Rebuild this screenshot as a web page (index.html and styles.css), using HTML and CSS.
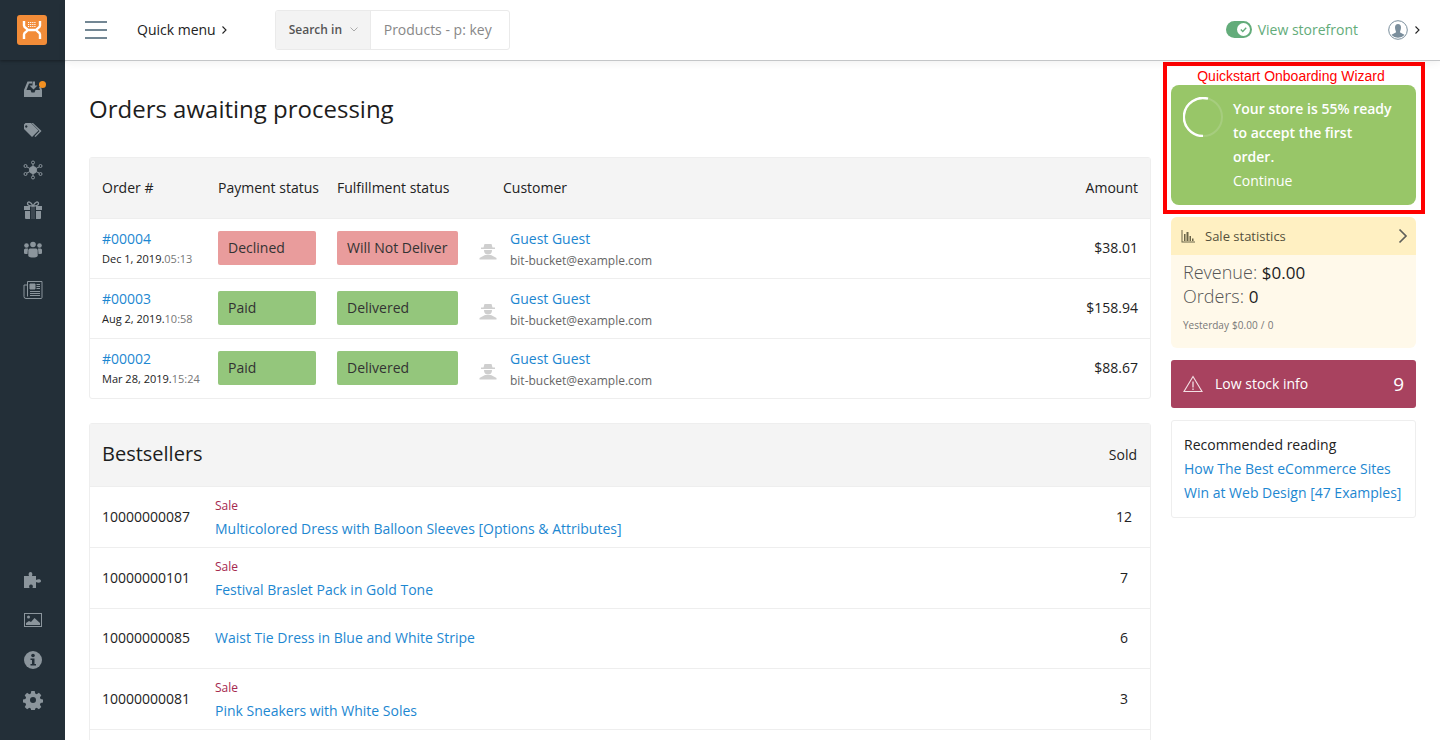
FILE: index.html
```html
<!DOCTYPE html>
<html lang="en">
<head>
<meta charset="utf-8">
<title>Orders awaiting processing</title>
<link rel="stylesheet" href="styles.css">
</head>
<body>
<div class="app">
  <nav class="sidebar">
    <div class="brand">
      <svg class="logo" width="30" height="30" viewBox="0 0 30 30"><rect width="30" height="30" rx="3" fill="#f28c38"/><path d="M7 6v4.500c0 2.500 3.500 3 3.500 4.500S7 17 7 19.500V24M23 6v4.500c0 2.500-3.500 3-3.500 4.500S23 17 23 19.500V24M10 15h10" fill="none" stroke="#fff" stroke-width="2.400"/><path d="M11 7.500h8M11 9.500h8M11 11.500h8" stroke="#fff" stroke-width="1.100" stroke-dasharray="1.200 .9"/></svg>
    </div>
    <div class="nav-top">
      <a class="nav-item"><svg width="20" height="20" viewBox="0 0 20 20" fill="#8b959c"><path d="M4.500 1.500H9v2H6L3.500 10h4l1 2.500h3l1-2.500H17l-1-3h2l1 3v7H1v-7z"/><path d="M9.500 1.500h2.500v4h2.500L10.500 9.500l-4-4h3z"/></svg><i class="dot"></i></a>
      <a class="nav-item"><svg width="20" height="20" viewBox="0 0 20 20" fill="#8b959c"><path d="M1 4.500V9l8 8 6.500-6.500L8 3H2.500zM4.500 6.500a1.200 1.200 0 1 1 0-.1z" fill-rule="evenodd"/><path d="M10 3l8.500 8-6 6-1-.8 5-5.200L8.500 3z"/></svg></a>
      <a class="nav-item"><svg width="20" height="20" viewBox="0 0 20 20" fill="#8b959c" stroke="#8b959c"><circle cx="10" cy="10" r="3.500"/><g fill="none" stroke-width="1"><circle cx="10" cy="2.500" r="1.500"/><circle cx="10" cy="17.500" r="1.500"/><circle cx="2.500" cy="6" r="1.500"/><circle cx="17.500" cy="6" r="1.500"/><circle cx="2.500" cy="14" r="1.500"/><circle cx="17.500" cy="14" r="1.500"/><path d="M10 4v3M10 13v3M4 7l3 1.500M16 7l-3 1.500M4 13l3-1.500M16 13l-3-1.500"/></g></svg></a>
      <a class="nav-item"><svg width="20" height="20" viewBox="0 0 20 20" fill="#8b959c"><path d="M1 6h6v4H1zM13 6h6v4h-6zM2 11h5v8H3a1 1 0 0 1-1-1zM13 11h5v7a1 1 0 0 1-1 1h-4z"/><path d="M8 6h4v13H8z" opacity=".25"/><path d="M10 6C8 1.500 4.500 1 4.500 3.500 4.500 5.500 7 6 10 6c3 0 5.500-.5 5.500-2.500C15.500 1 12 1.500 10 6z" fill="none" stroke="#8b959c" stroke-width="1.300"/></svg></a>
      <a class="nav-item"><svg width="20" height="20" viewBox="0 0 20 20" fill="#8b959c"><circle cx="3.500" cy="5.500" r="2.300"/><circle cx="10" cy="4.500" r="2.800"/><circle cx="16.500" cy="5.500" r="2.300"/><path d="M1 13.500V10c0-1 1-1.500 2-1.500h2L4.500 14H2.500zM19 13.500V10c0-1-1-1.500-2-1.500h-2l.5 5.500h2z"/><path d="M7 8.500h6c1 0 1.700 1 1.700 2V16c-1.500 2-8 2-9.400 0v-5.500c0-1 .7-2 1.700-2z"/></svg></a>
      <a class="nav-item"><svg width="20" height="20" viewBox="0 0 20 20" fill="none" stroke="#8b959c"><path d="M4.500 1.500h14.500v16a1 1 0 0 1-1 1H3A2 2 0 0 1 1 16.500V5h3.500zM4.500 5v11.500"/><path d="M7 4h5v5H7z" fill="#8b959c"/><path d="M13.500 4.500h3.500M13.500 6.500h3.500M13.500 8.500h3.500M7 11.500h10M7 13.500h10M7 15.500h10" stroke-width="1.200"/></svg></a>
    </div>
    <div class="nav-bottom">
      <a class="nav-item"><svg width="20" height="20" viewBox="0 0 20 20" fill="#8b959c"><path d="M1 6h5C5 4 6 2 7.500 2S10 4 9 6h4v4c2-1 5-1 5 1s-3 2-5 1v6H9.500c1-2 0-3.500-1.500-3.500S5.500 16 6.500 18H1z"/></svg></a>
      <a class="nav-item"><svg width="20" height="20" viewBox="0 0 20 20" fill="#8b959c"><rect x="1.500" y="3.500" width="17" height="13" fill="none" stroke="#8b959c"/><circle cx="5.500" cy="7" r="1.500"/><path d="M3 15v-2l3-2 2 1 3.500-4 5.500 5v2z"/></svg></a>
      <a class="nav-item"><svg width="20" height="20" viewBox="0 0 20 20"><circle cx="10" cy="10" r="9" fill="#8b959c"/><circle cx="10" cy="5.500" r="1.800" fill="#232f38"/><path d="M7.500 8.500h4v5.500H13v1.500H7.500V14H9v-4H7.500z" fill="#232f38"/></svg></a>
      <a class="nav-item"><svg width="20" height="20" viewBox="0 0 20 20" fill="#8b959c"><path fill-rule="evenodd" d="M8.300 1h3.400l.5 2.500 1.500.7 2.200-1.400 2.400 2.400-1.400 2.200.7 1.500 2.400.5v3.200l-2.400.5-.7 1.600 1.400 2.200-2.400 2.300-2.200-1.400-1.500.7-.5 2.500H8.300l-.5-2.500-1.500-.7-2.200 1.400-2.400-2.300 1.400-2.200-.7-1.600-2.400-.5V9.400l2.400-.5.7-1.500-1.400-2.200 2.400-2.400 2.200 1.400 1.500-.7zM10 7a3 3 0 1 0 0 6 3 3 0 0 0 0-6z"/></svg></a>
    </div>
  </nav>

  <div class="workspace">
    <header class="topbar">
      <button class="burger" aria-label="Menu"><span></span><span></span><span></span></button>
      <a class="quick">Quick menu<svg class="chev" width="7" height="10" viewBox="0 0 7 10"><path d="M1.500 1.500 5 5 1.500 8.500" fill="none" stroke="#222" stroke-width="1.100"/></svg></a>
      <div class="search">
        <span class="search-type">Search in<svg width="8" height="5" viewBox="0 0 8 5"><path d="M.5.500 4 4 7.500.500" fill="none" stroke="#aaa"/></svg></span>
        <span class="search-input">Products - p: key</span>
      </div>
      <div class="topbar-right">
        <span class="toggle"><span class="knob"><svg width="9" height="9" viewBox="0 0 10 10"><path d="M2 5l2.200 2.200L8 3" fill="none" stroke="#63ac7a" stroke-width="1.500"/></svg></span></span>
        <a class="storefront">View storefront</a>
        <span class="avatar"><svg width="20" height="20" viewBox="0 0 20 20"><circle cx="10" cy="10" r="9.300" fill="#fff" stroke="#7a8e9c"/><path d="M10 4c2 0 3 1.500 3 3.500S12 11 12 12c0 1 3 1.500 4.500 3A9 9 0 0 1 3.500 15c1.500-1.500 4.500-2 4.500-3 0-1-1-2.500-1-4.500S8 4 10 4z" fill="#7a8e9c"/></svg></span>
        <svg class="chev" width="7" height="10" viewBox="0 0 7 10"><path d="M1.500 1.500 5 5 1.500 8.500" fill="none" stroke="#222" stroke-width="1.100"/></svg>
      </div>
    </header>

    <div class="content">
      <main class="main">
        <h1 class="title">Orders awaiting processing</h1>
        <table class="panel orders">
          <colgroup><col class="w-order"><col class="w-pay"><col class="w-ful"><col class="w-ava"><col><col class="w-amt"></colgroup>
          <thead>
            <tr><th class="pad">Order #</th><th class="pad">Payment status</th><th class="pad">Fulfillment status</th><th class="c-cust" colspan="2">Customer</th><th class="c-amt">Amount</th></tr>
          </thead>
          <tbody>
            <tr>
              <td class="pad"><a class="link">#00004</a><div class="date">Dec 1, 2019.<span class="time">05:13</span></div></td>
              <td class="pad"><span class="pill pay red">Declined</span></td>
              <td class="pad"><span class="pill ful red">Will Not Deliver</span></td>
              <td><svg class="spy" width="20" height="20" viewBox="0 0 20 20"><use href="#spy"/></svg></td>
              <td class="c-who"><a class="link">Guest Guest</a><div class="mail">bit-bucket@example.com</div></td>
              <td class="c-amt">$38.01</td>
            </tr>
            <tr>
              <td class="pad"><a class="link">#00003</a><div class="date">Aug 2, 2019.<span class="time">10:58</span></div></td>
              <td class="pad"><span class="pill pay green">Paid</span></td>
              <td class="pad"><span class="pill ful green">Delivered</span></td>
              <td><svg class="spy" width="20" height="20" viewBox="0 0 20 20"><use href="#spy"/></svg></td>
              <td class="c-who"><a class="link">Guest Guest</a><div class="mail">bit-bucket@example.com</div></td>
              <td class="c-amt">$158.94</td>
            </tr>
            <tr>
              <td class="pad"><a class="link">#00002</a><div class="date">Mar 28, 2019.<span class="time">15:24</span></div></td>
              <td class="pad"><span class="pill pay green">Paid</span></td>
              <td class="pad"><span class="pill ful green">Delivered</span></td>
              <td><svg class="spy" width="20" height="20" viewBox="0 0 20 20"><use href="#spy"/></svg></td>
              <td class="c-who"><a class="link">Guest Guest</a><div class="mail">bit-bucket@example.com</div></td>
              <td class="c-amt">$88.67</td>
            </tr>
          </tbody>
        </table>

        <table class="panel sellers">
          <colgroup><col class="w-sku"><col><col class="w-sold"></colgroup>
          <thead>
            <tr><th class="s-head" colspan="2">Bestsellers</th><th class="s-sold">Sold</th></tr>
          </thead>
          <tbody>
            <tr class="has-sale"><td class="s-sku">10000000087</td><td class="s-name"><div class="sale">Sale</div><a class="link">Multicolored Dress with Balloon Sleeves [Options &amp; Attributes]</a></td><td class="s-qty">12</td></tr>
            <tr class="has-sale"><td class="s-sku">10000000101</td><td class="s-name"><div class="sale">Sale</div><a class="link">Festival Braslet Pack in Gold Tone</a></td><td class="s-qty">7</td></tr>
            <tr><td class="s-sku">10000000085</td><td class="s-name"><a class="link">Waist Tie Dress in Blue and White Stripe</a></td><td class="s-qty">6</td></tr>
            <tr class="has-sale"><td class="s-sku">10000000081</td><td class="s-name"><div class="sale">Sale</div><a class="link">Pink Sneakers with White Soles</a></td><td class="s-qty">3</td></tr>
            <tr><td class="s-sku">&nbsp;</td><td class="s-name"></td><td class="s-qty"></td></tr>
          </tbody>
        </table>
      </main>

      <aside class="aside">
        <div class="wizard-frame">
          <div class="wizard-label">Quickstart Onboarding Wizard</div>
          <div class="wizard">
            <svg class="ring" width="40" height="40" viewBox="0 0 40 40"><circle cx="20" cy="20" r="19" fill="none" stroke="#a6cd7e" stroke-width="2"/><path d="M25 1.700A19 19 0 1 0 20 39" fill="none" stroke="#fff" stroke-width="2.400"/></svg>
            <div class="wizard-text">
              <strong>Your store is 55% ready to accept the first order.</strong>
              <a>Continue</a>
            </div>
          </div>
        </div>

        <section class="stats">
          <div class="stats-head">
            <svg width="14" height="14" viewBox="0 0 14 14" fill="#6b6549"><path d="M.5 1h1v11.500H14v1H.5z"/><path d="M3 5h1.500v7H3zM5.500 3h2v9h-2zM8.500 7H10v5H8.500zM11 9.500h1.500V12H11z"/></svg>
            <span class="stats-title">Sale statistics</span>
            <svg class="stats-arrow" width="10" height="16" viewBox="0 0 10 16"><path d="M1.500 1.500 8 8l-6.500 6.500" fill="none" stroke="#5f5f5a" stroke-width="1.700"/></svg>
          </div>
          <div class="stats-body">
            <div class="stat-line">Revenue: <b>$0.00</b></div>
            <div class="stat-line">Orders: <b>0</b></div>
            <div class="stat-prev">Yesterday $0.00 / 0</div>
          </div>
        </section>

        <a class="lowstock">
          <svg width="20" height="18" viewBox="0 0 20 18" fill="none" stroke="#f3dfe4"><path d="M10 1.500 19 16.500H1z" stroke-width="1.100"/><path d="M10 6.500v6M10 13.500v1.500" stroke-width="1.300"/></svg>
          <span class="low-text">Low stock info</span>
          <span class="low-num">9</span>
        </a>

        <section class="reading">
          <div class="reading-title">Recommended reading</div>
          <a class="link">How The Best eCommerce Sites</a>
          <a class="link">Win at Web Design [47 Examples]</a>
        </section>
      </aside>
    </div>
  </div>
</div>
<svg class="defs" width="0" height="0"><defs><g id="spy" fill="#cfcfcf"><path d="M6.500 2h7l1 3.500H17V7H3V5.500h2.500z"/><path d="M6 8h8c0 3-1.500 4.500-4 4.500S6 11 6 8z"/><path d="M7 13h6l5.500 3v1.500h-17V16z"/></g></defs></svg>
</body>
</html>
```

FILE: styles.css
```css
* { box-sizing: border-box; }
html, body { margin: 0; height: 740px; overflow: hidden; }
body { font-family: "Open Sans", sans-serif; font-size: 14px; color: #222; background: #fff; }
a { text-decoration: none; }
.defs { position: absolute; }

.app { display: flex; height: 740px; }

.sidebar { width: 65px; flex: none; background: #232f38; display: flex; flex-direction: column; }
.brand { height: 60px; display: flex; align-items: center; justify-content: center; box-shadow: 0 1px 3px rgba(0,0,0,.35); }
.logo { margin-right: 1px; }
.nav-top { padding-top: 10px; }
.nav-bottom { margin-top: auto; padding-bottom: 20px; }
.nav-item { height: 40px; display: flex; align-items: center; justify-content: center; position: relative; }
.dot { position: absolute; left: 39px; top: 11px; width: 7px; height: 7px; border-radius: 50%; background: #f29021; }

.workspace { flex: 1; min-width: 0; display: flex; flex-direction: column; }
.topbar { height: 61px; flex: none; display: flex; align-items: center; padding: 0 19px 1px 20px; border-bottom: 1px solid #c4c6c8; box-shadow: 0 2px 8px rgba(0,0,0,.06); background: #fff; position: relative; z-index: 2; }
.burger { width: 22px; height: 18px; padding: 0; border: 0; background: none; display: flex; flex-direction: column; justify-content: space-between; }
.burger span { display: block; height: 2px; background: #738794; }
.quick { margin-left: 30px; color: #222; display: flex; align-items: center; gap: 5px; }
.search { margin-left: 47px; width: 235px; height: 40px; display: flex; border: 1px solid #eaeaea; border-radius: 3px; overflow: hidden; }
.search-type { width: 95px; background: #f3f3f3; border-right: 1px solid #eaeaea; font-size: 12px; font-weight: 600; color: #555; display: flex; align-items: center; gap: 8px; padding-left: 13px; }
.search-input { padding-left: 13px; color: #888; line-height: 38px; }
.topbar-right { margin-left: auto; display: flex; align-items: center; }
.toggle { width: 26px; height: 17px; border-radius: 9px; background: #63ac7a; display: flex; align-items: center; justify-content: flex-end; padding-right: 2px; }
.knob { width: 13px; height: 13px; border-radius: 50%; background: #fff; display: flex; align-items: center; justify-content: center; }
.storefront { margin-left: 6px; color: #63ac7a; }
.avatar { margin-left: 30px; margin-right: 6px; height: 20px; }

.content { flex: 1; min-height: 0; display: flex; }
.main { width: 1086px; flex: none; padding-left: 24px; }
.title { margin: 31px 0 32px; font-size: 24px; line-height: 33px; font-weight: 400; color: #1d1d1d; }

.panel { width: 100%; table-layout: fixed; border-collapse: separate; border-spacing: 0; border: 1px solid #eee; border-radius: 3px; }
.panel th { background: #f4f4f4; font-weight: 400; text-align: left; border-bottom: 1px solid #eee; padding: 0 0 2px; }
.panel td { border-bottom: 1px solid #eee; padding: 0 0 2px; }
.panel tbody tr:last-child td { border-bottom: 0; }

.w-order { width: 116px; }
.w-pay { width: 119px; }
.w-ful { width: 146px; }
.w-ava { width: 32px; }
.w-amt { width: 120px; }
.orders thead tr { height: 61px; }
.orders tbody tr { height: 60px; }
.orders tbody tr:last-child { height: 59px; }
.panel .pad { padding-left: 12px; }
.panel .c-cust { padding-left: 32px; }
.panel .c-who { padding: 0 0 0 7px; }
.panel .c-amt { padding-right: 12px; text-align: right; }
.spy { display: block; margin: 8px 0 0 7px; }
.link { color: #1d87d1; }
.date { font-size: 11px; line-height: 15px; margin-top: 3px; }
.time { color: #777; }
.mail { font-size: 12px; color: #666; line-height: 16px; margin-top: 5px; }
.pill { display: block; height: 34px; line-height: 34px; padding-left: 10px; border-radius: 2px; color: #333; white-space: nowrap; }
.pill.pay { width: 98px; }
.pill.ful { width: 121px; }
.pill.red { background: #e99c9c; }
.pill.green { background: #94c67c; }

.sellers { margin-top: 24px; }
.w-sku { width: 113px; }
.w-sold { width: 70px; }
.sellers thead tr { height: 63px; }
.sellers tbody tr { height: 60px; }
.sellers tbody tr.has-sale { height: 61px; }
.panel .s-head { font-size: 20px; padding: 0 0 4px 12px; color: #1d1d1d; }
.panel .s-sold { text-align: right; padding: 0 13px 1px 0; }
.panel .s-sku { padding-left: 12px; }
.panel .s-name { padding-left: 12px; }
.panel .has-sale .s-name { padding-top: 2px; padding-bottom: 0; }
.panel .s-qty { text-align: center; padding-left: 18px; }
.sale { font-size: 12px; line-height: 16px; color: #a5294f; margin-bottom: 5px; }

.aside { width: 245px; flex: none; margin-left: 20px; }
.wizard-frame { margin: 1px -9px 0 -8px; height: 152px; border: 4px solid #f00; padding: 19px 5px 0 4px; position: relative; }
.wizard-label { position: absolute; top: 2px; left: 0; right: 6px; text-align: center; font-family: "Liberation Sans", sans-serif; font-size: 14px; line-height: 16px; color: #f00; }
.wizard { height: 120px; background: #98c668; border-radius: 8px; display: flex; padding: 12px 0 0 12px; gap: 10px; color: #fff; }
.ring { flex: none; }
.wizard-text { width: 162px; line-height: 24px; }
.wizard-text strong { display: block; font-weight: 600; }
.wizard-text a { display: block; }

.stats { margin-top: 3px; border-radius: 6px; overflow: hidden; background: #fff9ea; height: 131px; }
.stats-head { height: 38px; background: #fff0c2; display: flex; align-items: center; padding: 0 8px 0 10px; }
.stats-title { margin-left: 10px; font-size: 13px; color: #55503c; }
.stats-arrow { margin-left: auto; }
.stats-body { padding: 5px 12px 0; }
.stat-line { height: 24px; font-size: 18px; line-height: 24px; font-weight: 300; color: #555; }
.stat-line b { font-size: 17px; font-weight: 400; color: #1d1d1d; }
.stat-prev { font-size: 10px; margin-top: 10px; color: #777; word-spacing: .6px; }

.lowstock { margin-top: 12px; height: 48px; background: #a8425f; border-radius: 3px; display: flex; align-items: center; padding: 0 12px 1px; color: #fff; }
.low-text { margin-left: 12px; }
.low-num { margin-left: auto; font-size: 19px; }

.reading { margin-top: 12px; border: 1px solid #eee; border-radius: 3px; padding: 12px; height: 98px; line-height: 24px; }
.reading a { display: block; white-space: nowrap; }
.reading-title { color: #222; }
```
